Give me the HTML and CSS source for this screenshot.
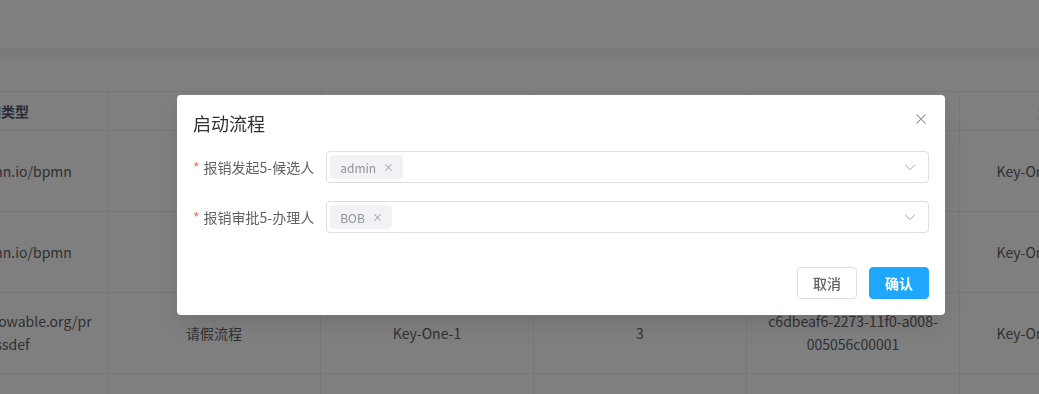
FILE: index.html
```html
<!DOCTYPE html>
<html lang="zh-CN">
<head>
    <meta charset="UTF-8">
    <meta name="viewport" content="width=device-width, initial-scale=1.0">
    <title>流程定义</title>
    <link rel="stylesheet" href="styles.css">
</head>
<body>
    <div class="page">
        <div class="page-top"></div>
        <div class="page-band"></div>
        <div class="page-gap"></div>

        <!-- process table (scrolled to the right a little) -->
        <div class="table-wrap">
            <table class="grid">
                <colgroup>
                    <col><col><col><col><col><col>
                </colgroup>
                <thead>
                    <tr>
                        <th>空间类型</th>
                        <th>流程名称</th>
                        <th>流程Key</th>
                        <th>版本</th>
                        <th>部署ID</th>
                        <th>资源名称</th>
                    </tr>
                </thead>
                <tbody>
                    <tr>
                        <td>http://bpmn.io/bpmn</td>
                        <td>报销流程</td>
                        <td>Key-One-5</td>
                        <td>5</td>
                        <td>0a31e7d2-2b10-11f0-a008-005056c00001</td>
                        <td>Key-One-5.bpmn.xml</td>
                    </tr>
                    <tr>
                        <td>http://bpmn.io/bpmn</td>
                        <td>报销流程</td>
                        <td>Key-One-4</td>
                        <td>4</td>
                        <td>e1f4b6a3-2a47-11f0-a008-005056c00001</td>
                        <td>Key-One-4.bpmn.xml</td>
                    </tr>
                    <tr>
                        <td>http://www.flowable.org/processdef</td>
                        <td>请假流程</td>
                        <td>Key-One-1</td>
                        <td>3</td>
                        <td>c6dbeaf6-2273-11f0-a008-005056c00001</td>
                        <td>Key-One-1.bpmn.xml</td>
                    </tr>
                    <tr>
                        <td></td>
                        <td></td>
                        <td></td>
                        <td></td>
                        <td></td>
                        <td></td>
                    </tr>
                </tbody>
            </table>
        </div>
    </div>

    <!-- start process dialog -->
    <div class="mask">
        <div class="dialog">
            <div class="dialog-header">
                <span class="dialog-title">启动流程</span>
                <button class="dialog-close" type="button" aria-label="关闭">
                    <svg viewBox="0 0 1024 1024"><path fill="currentColor" d="M764.288 214.592 512 466.88 259.712 214.592a31.936 31.936 0 0 0-45.12 45.12L466.752 512 214.528 764.224a31.936 31.936 0 1 0 45.12 45.184L512 557.184l252.288 252.288a31.936 31.936 0 0 0 45.12-45.12L557.12 512.064l252.288-252.352a31.936 31.936 0 1 0-45.12-45.184z"/></svg>
                </button>
            </div>

            <form class="form">
                <div class="form-item">
                    <label class="form-label"><span class="req">*</span>报销发起5-候选人</label>
                    <div class="select">
                        <span class="tag">admin
                            <svg class="tag-close" viewBox="0 0 1024 1024"><path fill="currentColor" d="M764.288 214.592 512 466.88 259.712 214.592a31.936 31.936 0 0 0-45.12 45.12L466.752 512 214.528 764.224a31.936 31.936 0 1 0 45.12 45.184L512 557.184l252.288 252.288a31.936 31.936 0 0 0 45.12-45.12L557.12 512.064l252.288-252.352a31.936 31.936 0 1 0-45.12-45.184z"/></svg>
                        </span>
                        <svg class="select-arrow" viewBox="0 0 1024 1024"><path fill="currentColor" d="M831.872 340.864 512 652.672 192.128 340.864a30.592 30.592 0 0 0-42.752 0 29.12 29.12 0 0 0 0 41.6L489.664 714.24a32 32 0 0 0 44.672 0l340.288-331.712a29.12 29.12 0 0 0 0-41.728 30.592 30.592 0 0 0-42.752 0z"/></svg>
                    </div>
                </div>

                <div class="form-item">
                    <label class="form-label"><span class="req">*</span>报销审批5-办理人</label>
                    <div class="select">
                        <span class="tag">BOB
                            <svg class="tag-close" viewBox="0 0 1024 1024"><path fill="currentColor" d="M764.288 214.592 512 466.88 259.712 214.592a31.936 31.936 0 0 0-45.12 45.12L466.752 512 214.528 764.224a31.936 31.936 0 1 0 45.12 45.184L512 557.184l252.288 252.288a31.936 31.936 0 0 0 45.12-45.12L557.12 512.064l252.288-252.352a31.936 31.936 0 1 0-45.12-45.184z"/></svg>
                        </span>
                        <svg class="select-arrow" viewBox="0 0 1024 1024"><path fill="currentColor" d="M831.872 340.864 512 652.672 192.128 340.864a30.592 30.592 0 0 0-42.752 0 29.12 29.12 0 0 0 0 41.6L489.664 714.24a32 32 0 0 0 44.672 0l340.288-331.712a29.12 29.12 0 0 0 0-41.728 30.592 30.592 0 0 0-42.752 0z"/></svg>
                    </div>
                </div>
            </form>

            <div class="dialog-footer">
                <button class="btn" type="button">取消</button>
                <button class="btn btn-primary" type="button">确认</button>
            </div>
        </div>
    </div>
</body>
</html>
```

FILE: styles.css
```css
/* page styles */
body {
    margin: 0;
    background-color: #FFFFFF;
    color: #606266;
    font-family: "Noto Sans CJK SC", "Noto Sans", sans-serif;
    font-size: 14px;
    overflow: hidden;
}

.page-top {
    height: 48px;
    border-bottom: 1px solid #EEEEEE;
}

.page-band {
    height: 11px;
    background-color: #F6F6F6;
}

.page-gap {
    height: 31px;
}

/* process table */
.table-wrap {
    overflow: hidden;
}

.grid {
    table-layout: fixed;
    width: 1278px;
    margin-left: -105px;
    border-collapse: separate;
    border-spacing: 0;
    border-top: 1px solid #EBEEF5;
}

.grid col {
    width: 213px;
}

.grid th, .grid td {
    box-sizing: border-box;
    padding: 0 12px;
    text-align: center;
    line-height: 23px;
    border-right: 1px solid #EBEEF5;
    border-bottom: 1px solid #EBEEF5;
}

.grid th {
    height: 39px;
    font-weight: 700;
    color: #515A6E;
}

.grid td {
    height: 81px;
}

.grid td:first-child {
    word-break: break-all;
}

/* dialog overlay */
.mask {
    position: fixed;
    inset: 0;
    background-color: rgba(0, 0, 0, 0.5);
    padding: 95px 0 0 177px;
}

.dialog {
    position: relative;
    width: 768px;
    box-sizing: border-box;
    padding: 16px;
    background-color: #FFFFFF;
    border-radius: 4px;
    box-shadow: 0 12px 32px 4px rgba(0, 0, 0, 0.04), 0 8px 20px rgba(0, 0, 0, 0.08);
}

.dialog-header {
    padding-bottom: 16px;
}

.dialog-title {
    font-size: 18px;
    line-height: 24px;
    color: #303133;
}

.dialog-close {
    position: absolute;
    top: 0;
    right: 0;
    width: 48px;
    height: 48px;
    padding: 0;
    border: none;
    background: transparent;
    color: #909399;
    display: flex;
    align-items: center;
    justify-content: center;
    cursor: pointer;
}

.dialog-close svg {
    width: 16px;
    height: 16px;
}

/* form rows */
.form {
    margin: 0;
}

.form-item {
    display: flex;
    margin-bottom: 18px;
}

.form-label {
    padding-right: 12px;
    line-height: 32px;
    color: #606266;
    white-space: nowrap;
}

.req {
    color: #F56C6C;
    margin-right: 4px;
}

.select {
    flex: 1;
    height: 32px;
    box-sizing: border-box;
    display: flex;
    align-items: center;
    padding: 0 11px 0 3px;
    border: 1px solid #DCDFE6;
    border-radius: 4px;
}

.tag {
    display: flex;
    align-items: center;
    height: 24px;
    padding: 0 9px 0 10px;
    border-radius: 4px;
    background-color: #F0F2F5;
    color: #909399;
    font-size: 12px;
}

.tag-close {
    width: 11px;
    height: 11px;
    margin-left: 7px;
}

.select-arrow {
    width: 14px;
    height: 14px;
    margin-left: auto;
    color: #A8ABB2;
}

/* footer buttons */
.dialog-footer {
    padding-top: 16px;
    text-align: right;
    font-size: 0;
}

.btn {
    height: 32px;
    padding: 0 15px;
    margin-left: 12px;
    box-sizing: border-box;
    border: 1px solid #DCDFE6;
    border-radius: 4px;
    background-color: #FFFFFF;
    color: #606266;
    font-family: inherit;
    font-size: 14px;
    font-weight: 500;
    cursor: pointer;
}

.btn-primary {
    background-color: #1EA7FD;
    border-color: #1EA7FD;
    color: #FFFFFF;
    font-weight: 700;
}
```
